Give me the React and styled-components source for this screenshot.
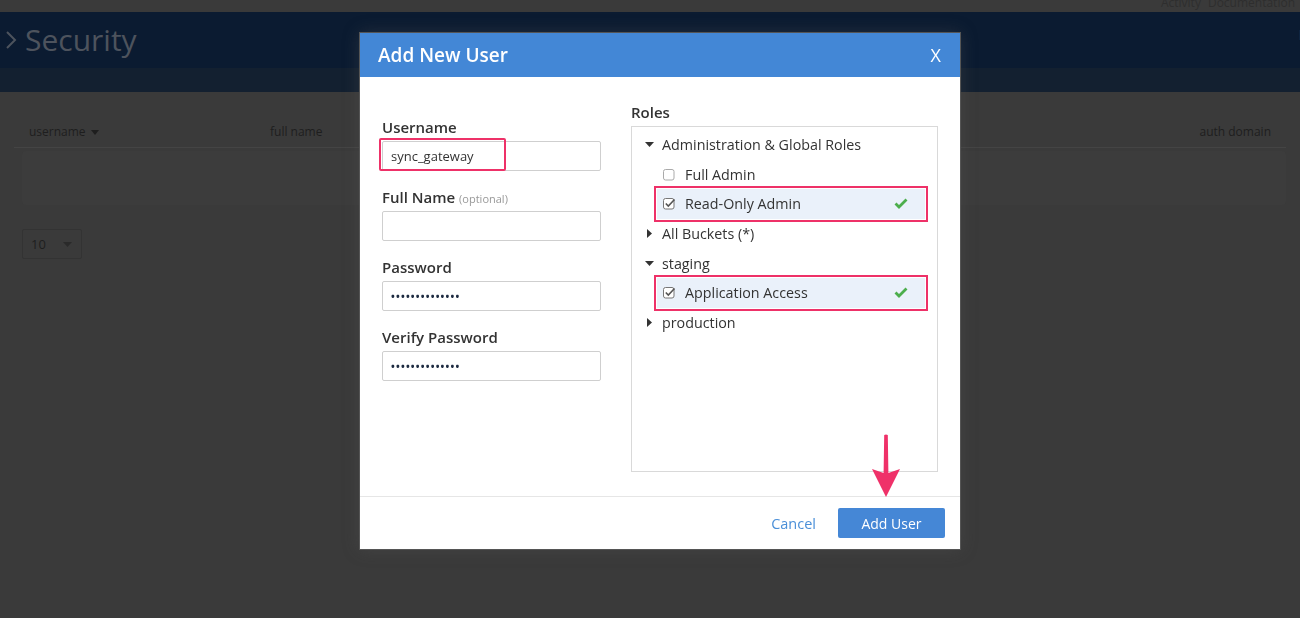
import React from "react";
import styled, { createGlobalStyle } from "styled-components";

const GlobalStyle = createGlobalStyle`
  html, body {
    margin: 0;
    height: 100%;
    overflow: hidden;
  }
  body {
    font-family: "Open Sans", "Liberation Sans", sans-serif;
    background: #3a3a3a;
  }
  * {
    box-sizing: border-box;
  }
`;

const roles = [
  { type: "group", label: "Administration & Global Roles", open: true },
  { type: "role", label: "Full Admin" },
  { type: "role", label: "Read-Only Admin", checked: true },
  { type: "group", label: "All Buckets (*)" },
  { type: "group", label: "staging", open: true },
  { type: "role", label: "Application Access", checked: true },
  { type: "group", label: "production" },
];

export default function App() {
  return (
    <>
      <GlobalStyle />
      <Page>
        <TopStrip>
          <TopLink>Activity</TopLink>
          <TopLink>Documentation</TopLink>
        </TopStrip>
        <TitleBand>
          <PageTitle>
            <svg width="12" height="20" viewBox="0 0 12 20">
              <polyline
                points="2,2 10,10 2,18"
                fill="none"
                stroke="#4d535d"
                strokeWidth="2"
              />
            </svg>
            Security
          </PageTitle>
          <CutText>F</CutText>
        </TitleBand>
        <SubBand />
        <Content>
          <TableHead>
            <HeadCell $width={241}>
              username
              <svg width="8" height="5" viewBox="0 0 8 5">
                <polygon points="0,0 8,0 4,5" fill="#1e1e1e" />
              </svg>
            </HeadCell>
            <HeadCell>full name</HeadCell>
            <HeadCell $right>auth domain</HeadCell>
          </TableHead>
          <EmptyRow />
          <PageSize>
            10
            <svg width="9" height="5" viewBox="0 0 9 5">
              <polygon points="0,0 9,0 4.5,5" fill="#2a2a2a" />
            </svg>
          </PageSize>
        </Content>
      </Page>

      <Overlay>
        <Modal>
          <ModalHeader>
            <ModalTitle>Add New User</ModalTitle>
            <CloseButton>X</CloseButton>
          </ModalHeader>
          <ModalBody>
            <FieldsColumn>
              <Field>
                <Label>Username</Label>
                <FieldWrap>
                  <TextInput value="sync_gateway" readOnly />
                  <InputMark />
                </FieldWrap>
              </Field>
              <Field>
                <Label>
                  Full Name <Optional>(optional)</Optional>
                </Label>
                <TextInput value="" readOnly />
              </Field>
              <Field>
                <Label>Password</Label>
                <TextInput $secret value="••••••••••••••" readOnly />
              </Field>
              <Field>
                <Label>Verify Password</Label>
                <TextInput $secret value="••••••••••••••" readOnly />
              </Field>
            </FieldsColumn>
            <RolesColumn>
              <Label>Roles</Label>
              <TreeBox>
                {roles.map((item) =>
                  item.type === "group" ? (
                    <GroupRow key={item.label}>
                      <Caret open={item.open} />
                      {item.label}
                    </GroupRow>
                  ) : (
                    <RoleRow key={item.label} $selected={item.checked}>
                      <CheckBox checked={item.checked} />
                      <RoleName>{item.label}</RoleName>
                      {item.checked && <GreenCheck />}
                    </RoleRow>
                  )
                )}
              </TreeBox>
            </RolesColumn>
          </ModalBody>
          <ModalFooter>
            <CancelLink>Cancel</CancelLink>
            <PrimaryButton>Add User</PrimaryButton>
          </ModalFooter>
          <Pointer width="30" height="64" viewBox="0 0 30 64">
            <path
              d="M13.2 1 Q15 0 16.8 1 L17.4 39 L29 35 L15 63 L1 35 L12.6 39 Z"
              fill="#ef3169"
            />
          </Pointer>
        </Modal>
      </Overlay>
    </>
  );
}

function Caret({ open }) {
  return open ? (
    <svg width="9" height="9" viewBox="0 0 9 9">
      <polygon points="0,2 9,2 4.5,7" fill="#333" />
    </svg>
  ) : (
    <svg width="9" height="9" viewBox="0 0 9 9">
      <polygon points="2,0 7,4.5 2,9" fill="#333" />
    </svg>
  );
}

function CheckBox({ checked }) {
  return (
    <svg width="13" height="13" viewBox="0 0 13 13">
      <rect
        x="0.5"
        y="1.5"
        width="10.5"
        height="10.5"
        rx="2"
        fill="#fff"
        stroke={checked ? "#777" : "#aaa"}
      />
      {checked && (
        <polyline
          points="2.8,6.5 5.3,9 11.5,2.5"
          fill="none"
          stroke="#555"
          strokeWidth="1.6"
        />
      )}
    </svg>
  );
}

function GreenCheck() {
  return (
    <CheckMark width="14" height="11" viewBox="0 0 14 11">
      <polyline
        points="1.5,5.5 5,9 12.5,1.5"
        fill="none"
        stroke="#4cae4c"
        strokeWidth="2.8"
      />
    </CheckMark>
  );
}

const Page = styled.div`
  min-height: 100vh;
  background: #3a3a3a;
`;

const TopStrip = styled.div`
  height: 12px;
  overflow: hidden;
  display: flex;
  justify-content: flex-end;
  gap: 7px;
  padding-right: 5px;
`;

const TopLink = styled.span`
  font-size: 12px;
  line-height: 12px;
  margin-top: -3px;
  color: #2e2e2e;
`;

const TitleBand = styled.div`
  height: 56px;
  background: #0b1b31;
  display: flex;
  justify-content: space-between;
  align-items: center;
  overflow: hidden;
`;

const PageTitle = styled.h1`
  margin: 0;
  padding-left: 5px;
  display: flex;
  align-items: center;
  gap: 8px;
  font-size: 30px;
  font-weight: 400;
  line-height: 56px;
  color: #4d535d;
`;

const CutText = styled.span`
  font-size: 14px;
  font-weight: 600;
  color: #3c424c;
  margin-right: -6px;
  margin-top: -12px;
`;

const SubBand = styled.div`
  height: 24px;
  background: #132030;
`;

const Content = styled.div`
  padding: 22px 14px 0;
`;

const TableHead = styled.div`
  display: flex;
  height: 34px;
  padding: 9px 15px 0;
  border-bottom: 1px solid #444;
`;

const HeadCell = styled.div`
  display: flex;
  align-items: center;
  gap: 5px;
  height: 18px;
  font-size: 12px;
  line-height: 18px;
  color: #1e1e1e;
  width: ${(p) => (p.$width ? `${p.$width}px` : "auto")};
  margin-left: ${(p) => (p.$right ? "auto" : "0")};
`;

const EmptyRow = styled.div`
  height: 54px;
  margin: 3px 0 0 8px;
  border-radius: 4px;
  background: #3c3c3c;
`;

const PageSize = styled.div`
  margin: 24px 0 0 8px;
  width: 60px;
  height: 30px;
  border: 1px solid #333;
  border-radius: 2px;
  display: flex;
  align-items: center;
  justify-content: space-between;
  padding: 0 9px 0 8px;
  font-size: 13px;
  color: #1e1e1e;
`;

const Overlay = styled.div`
  position: fixed;
  inset: 0;
  display: flex;
  justify-content: center;
  align-items: flex-start;
  padding: 33px 0 0 20px;
`;

const Modal = styled.div`
  position: relative;
  width: 600px;
  background: #fff;
  box-shadow: 0 0 0 1px #555, 0 0 16px rgba(90, 90, 90, 0.35);
`;

const ModalHeader = styled.div`
  height: 44px;
  background: #4387d6;
  display: flex;
  align-items: center;
  justify-content: space-between;
  padding: 0 19px 0 18px;
`;

const ModalTitle = styled.h2`
  margin: 0;
  font-size: 19px;
  font-weight: 600;
  color: #fff;
`;

const CloseButton = styled.button`
  border: none;
  background: none;
  padding: 0;
  font-family: inherit;
  font-size: 18px;
  color: #fff;
  cursor: pointer;
`;

const ModalBody = styled.div`
  display: flex;
  gap: 30px;
  padding: 24px 22px;
`;

const FieldsColumn = styled.div`
  width: 219px;
  padding-top: 15px;
  display: flex;
  flex-direction: column;
  gap: 15px;
`;

const Field = styled.div`
  display: flex;
  flex-direction: column;
  gap: 3px;
`;

const Label = styled.div`
  height: 22px;
  font-size: 15px;
  font-weight: 600;
  line-height: 22px;
  color: #333;
  white-space: nowrap;
`;

const Optional = styled.span`
  font-size: 11px;
  line-height: 1;
  font-weight: 400;
  color: #999;
`;

const FieldWrap = styled.div`
  position: relative;
`;

const TextInput = styled.input`
  display: block;
  width: 100%;
  height: 30px;
  border: 1px solid #cfcfcf;
  border-radius: 2px;
  padding: 0 8px;
  font-family: inherit;
  font-size: ${(p) => (p.$secret ? "10px" : "13px")};
  font-weight: ${(p) => (p.$secret ? 700 : 400)};
  letter-spacing: ${(p) => (p.$secret ? "1.2px" : "0")};
  color: ${(p) => (p.$secret ? "#1c2a40" : "#333")};
  outline: none;
`;

const InputMark = styled.div`
  position: absolute;
  left: -3px;
  top: -3px;
  width: 127px;
  height: 33px;
  border: 2px solid #ee3168;
  border-radius: 2px;
`;

const RolesColumn = styled.div`
  flex: 1;
  display: flex;
  flex-direction: column;
  gap: 3px;
`;

const TreeBox = styled.div`
  height: 346px;
  border: 1px solid #d9d9d9;
  padding: 3px 12px 0 0;
  font-size: 14.3px;
  color: #333;
`;

const GroupRow = styled.div`
  height: 29.6px;
  display: flex;
  align-items: center;
  gap: 8px;
  padding-left: 13px;
`;

const RoleRow = styled.div`
  height: 29.6px;
  margin-left: 25px;
  display: flex;
  align-items: center;
  gap: 9px;
  padding: 0 17px 0 6px;
  background: ${(p) => (p.$selected ? "#eaf1fa" : "transparent")};
  outline: ${(p) => (p.$selected ? "2px solid #ee3168" : "none")};
  outline-offset: 1px;
`;

const RoleName = styled.span`
  flex: 1;
`;

const CheckMark = styled.svg`
  flex: none;
`;

const ModalFooter = styled.div`
  height: 53px;
  border-top: 1px solid #e6e6e6;
  display: flex;
  justify-content: flex-end;
  align-items: center;
  gap: 22px;
  padding-right: 15px;
`;

const CancelLink = styled.a`
  font-size: 14.5px;
  color: #4a8fd8;
  cursor: pointer;
`;

const PrimaryButton = styled.button`
  width: 107px;
  height: 30px;
  border: none;
  border-radius: 2px;
  background: #4587d6;
  color: #fff;
  font-family: inherit;
  font-size: 14px;
  cursor: pointer;
`;

const Pointer = styled.svg`
  position: absolute;
  left: 511px;
  top: 401px;
`;
